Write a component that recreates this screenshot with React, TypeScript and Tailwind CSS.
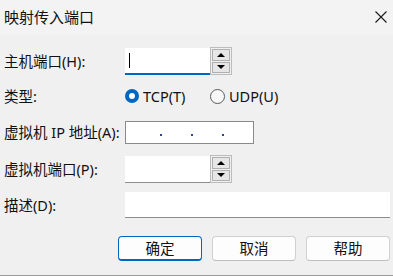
const FONT = "font-['Noto_Sans','Noto_Sans_CJK_SC',sans-serif]";

function SpinArrow({ up }: { up?: boolean }) {
  return (
    <div className="flex-1 bg-[#e6e6e6] border border-[#b0b0b0] flex items-center justify-center">
      {up ? (
        <div className="w-0 h-0 border-x-[4px] border-b-[4px] border-x-transparent border-b-black" />
      ) : (
        <div className="w-0 h-0 border-x-[4px] border-t-[4px] border-x-transparent border-t-black" />
      )}
    </div>
  );
}

function SpinBox({ focused }: { focused?: boolean }) {
  return (
    <div className="flex items-center h-[28px]">
      <div
        className={`w-[85px] h-[27px] bg-white flex items-center ${
          focused ? 'border-b-2 border-[#0067c0]' : 'border-b border-[#8c8c8c]'
        }`}
      >
        {focused && <div className="ml-[4px] mt-[1px] w-px h-[15px] bg-black" />}
      </div>
      <div className="w-[22px] h-[28px] border border-[#bcbcbc] p-px flex flex-col gap-px bg-[#f0f0f0]">
        <SpinArrow up />
        <SpinArrow />
      </div>
    </div>
  );
}

function Radio({ checked, label }: { checked?: boolean; label: string }) {
  return (
    <div className="flex items-center gap-[4px]">
      {checked ? (
        <div className="w-[14px] h-[14px] rounded-full bg-[#0067c0] flex items-center justify-center">
          <div className="w-[6px] h-[6px] rounded-full bg-white" />
        </div>
      ) : (
        <div className="w-[15px] h-[15px] rounded-full border border-[#5a5a5a] bg-[#f7f7f7]" />
      )}
      <span>{label}</span>
    </div>
  );
}

function Dot() {
  return <div className="w-[2px] h-[2px] mt-[5px] bg-[#2a4a8a] shrink-0" />;
}

export default function App() {
  const label = 'w-[121px] shrink-0';
  return (
    <div className={`${FONT} w-[393px] h-[276px] text-[14.5px] leading-none text-[#111] bg-[#f0f0f0] flex flex-col`}>
      {/* title bar */}
      <div className="h-[35px] shrink-0 bg-[#f3f3f3] flex items-center justify-between pl-[4px] pr-[6px]">
        <span className="text-[15px] pb-[1px]">映射传入端口</span>
        <svg width="12" height="12" viewBox="0 0 12 12" className="mb-[1px]">
          <path d="M0.5 0.5 L11.5 11.5 M11.5 0.5 L0.5 11.5" stroke="#1a1a1a" strokeWidth="1.1" />
        </svg>
      </div>

      <div className="flex-1 flex flex-col pl-[4px] border-b border-[#9c9c9c]">
        <div className="flex items-center mt-[12px]">
          <span className={label}>主机端口(H):</span>
          <SpinBox focused />
        </div>

        <div className="flex items-center mt-[10px] h-[22px]">
          <span className={label}>类型:</span>
          <div className="w-[85px]">
            <Radio checked label="TCP(T)" />
          </div>
          <Radio label="UDP(U)" />
        </div>

        <div className="flex items-center mt-[14px]">
          <span className={label}>虚拟机 IP 地址(A):</span>
          <div className="w-[129px] h-[23px] bg-white border border-[#8a8a8a] flex items-center">
            <div className="w-[34px]" />
            <Dot />
            <div className="w-[29px]" />
            <Dot />
            <div className="w-[29px]" />
            <Dot />
          </div>
        </div>

        <div className="flex items-center mt-[11px]">
          <span className={label}>虚拟机端口(P):</span>
          <SpinBox />
        </div>

        <div className="flex items-center mt-[9px]">
          <span className={label}>描述(D):</span>
          <div className="w-[265px] h-[26px] bg-white border-b border-[#8c8c8c]" />
        </div>

        <div className="flex justify-end gap-[10px] pr-[3px] mt-[18px]">
          <button className="w-[84px] h-[25px] rounded-[4px] bg-[#fdfdfd] border border-[#0067c0] border-b-2 flex items-center justify-center">
            确定
          </button>
          <button className="w-[84px] h-[25px] rounded-[4px] bg-[#fdfdfd] border border-[#d0d0d0] border-b-[#bdbdbd] flex items-center justify-center">
            取消
          </button>
          <button className="w-[84px] h-[25px] rounded-[4px] bg-[#fdfdfd] border border-[#d0d0d0] border-b-[#bdbdbd] flex items-center justify-center">
            帮助
          </button>
        </div>
      </div>
    </div>
  );
}
